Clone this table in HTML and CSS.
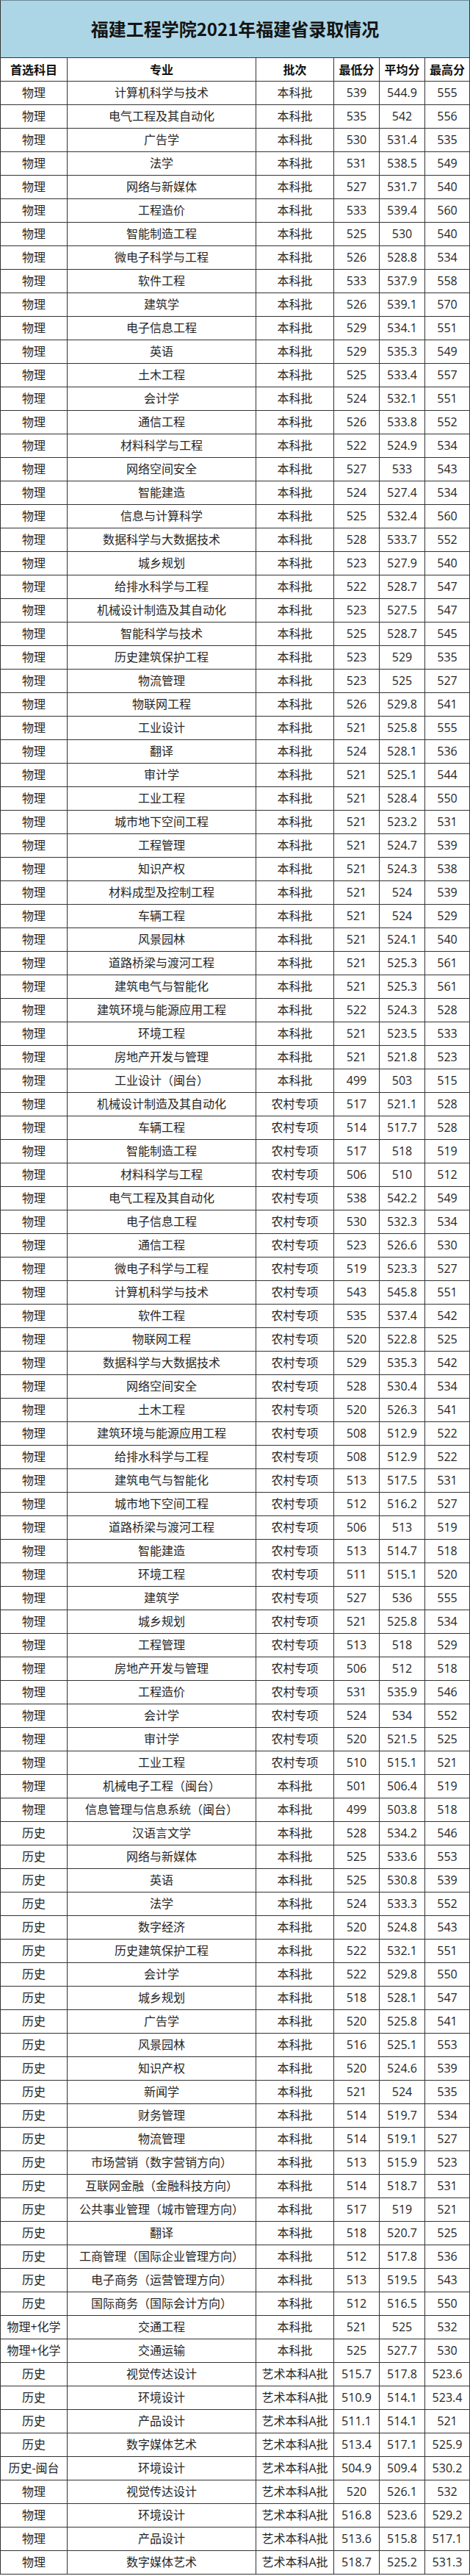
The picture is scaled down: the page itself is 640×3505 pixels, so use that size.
FILE: index.html
```html
<!DOCTYPE html>
<html lang="zh-CN">
<head>
<meta charset="utf-8">
<title>福建工程学院2021年福建省录取情况</title>
<link rel="stylesheet" href="styles.css">
</head>
<body>
<div class="sheet">
<div class="title">福建工程学院2021年福建省录取情况</div>
<div class="row head"><span>首选科目</span><span>专业</span><span>批次</span><span>最低分</span><span>平均分</span><span>最高分</span></div>
<div class="row"><span>物理</span><span>计算机科学与技术</span><span>本科批</span><span>539</span><span>544.9</span><span>555</span></div>
<div class="row"><span>物理</span><span>电气工程及其自动化</span><span>本科批</span><span>535</span><span>542</span><span>556</span></div>
<div class="row"><span>物理</span><span>广告学</span><span>本科批</span><span>530</span><span>531.4</span><span>535</span></div>
<div class="row"><span>物理</span><span>法学</span><span>本科批</span><span>531</span><span>538.5</span><span>549</span></div>
<div class="row"><span>物理</span><span>网络与新媒体</span><span>本科批</span><span>527</span><span>531.7</span><span>540</span></div>
<div class="row"><span>物理</span><span>工程造价</span><span>本科批</span><span>533</span><span>539.4</span><span>560</span></div>
<div class="row"><span>物理</span><span>智能制造工程</span><span>本科批</span><span>525</span><span>530</span><span>540</span></div>
<div class="row"><span>物理</span><span>微电子科学与工程</span><span>本科批</span><span>526</span><span>528.8</span><span>534</span></div>
<div class="row"><span>物理</span><span>软件工程</span><span>本科批</span><span>533</span><span>537.9</span><span>558</span></div>
<div class="row"><span>物理</span><span>建筑学</span><span>本科批</span><span>526</span><span>539.1</span><span>570</span></div>
<div class="row"><span>物理</span><span>电子信息工程</span><span>本科批</span><span>529</span><span>534.1</span><span>551</span></div>
<div class="row"><span>物理</span><span>英语</span><span>本科批</span><span>529</span><span>535.3</span><span>549</span></div>
<div class="row"><span>物理</span><span>土木工程</span><span>本科批</span><span>525</span><span>533.4</span><span>557</span></div>
<div class="row"><span>物理</span><span>会计学</span><span>本科批</span><span>524</span><span>532.1</span><span>551</span></div>
<div class="row"><span>物理</span><span>通信工程</span><span>本科批</span><span>526</span><span>533.8</span><span>552</span></div>
<div class="row"><span>物理</span><span>材料科学与工程</span><span>本科批</span><span>522</span><span>524.9</span><span>534</span></div>
<div class="row"><span>物理</span><span>网络空间安全</span><span>本科批</span><span>527</span><span>533</span><span>543</span></div>
<div class="row"><span>物理</span><span>智能建造</span><span>本科批</span><span>524</span><span>527.4</span><span>534</span></div>
<div class="row"><span>物理</span><span>信息与计算科学</span><span>本科批</span><span>525</span><span>532.4</span><span>560</span></div>
<div class="row"><span>物理</span><span>数据科学与大数据技术</span><span>本科批</span><span>528</span><span>533.7</span><span>552</span></div>
<div class="row"><span>物理</span><span>城乡规划</span><span>本科批</span><span>523</span><span>527.9</span><span>540</span></div>
<div class="row"><span>物理</span><span>给排水科学与工程</span><span>本科批</span><span>522</span><span>528.7</span><span>547</span></div>
<div class="row"><span>物理</span><span>机械设计制造及其自动化</span><span>本科批</span><span>523</span><span>527.5</span><span>547</span></div>
<div class="row"><span>物理</span><span>智能科学与技术</span><span>本科批</span><span>525</span><span>528.7</span><span>545</span></div>
<div class="row"><span>物理</span><span>历史建筑保护工程</span><span>本科批</span><span>523</span><span>529</span><span>535</span></div>
<div class="row"><span>物理</span><span>物流管理</span><span>本科批</span><span>523</span><span>525</span><span>527</span></div>
<div class="row"><span>物理</span><span>物联网工程</span><span>本科批</span><span>526</span><span>529.8</span><span>541</span></div>
<div class="row"><span>物理</span><span>工业设计</span><span>本科批</span><span>521</span><span>525.8</span><span>555</span></div>
<div class="row"><span>物理</span><span>翻译</span><span>本科批</span><span>524</span><span>528.1</span><span>536</span></div>
<div class="row"><span>物理</span><span>审计学</span><span>本科批</span><span>521</span><span>525.1</span><span>544</span></div>
<div class="row"><span>物理</span><span>工业工程</span><span>本科批</span><span>521</span><span>528.4</span><span>550</span></div>
<div class="row"><span>物理</span><span>城市地下空间工程</span><span>本科批</span><span>521</span><span>523.2</span><span>531</span></div>
<div class="row"><span>物理</span><span>工程管理</span><span>本科批</span><span>521</span><span>524.7</span><span>539</span></div>
<div class="row"><span>物理</span><span>知识产权</span><span>本科批</span><span>521</span><span>524.3</span><span>538</span></div>
<div class="row"><span>物理</span><span>材料成型及控制工程</span><span>本科批</span><span>521</span><span>524</span><span>539</span></div>
<div class="row"><span>物理</span><span>车辆工程</span><span>本科批</span><span>521</span><span>524</span><span>529</span></div>
<div class="row"><span>物理</span><span>风景园林</span><span>本科批</span><span>521</span><span>524.1</span><span>540</span></div>
<div class="row"><span>物理</span><span>道路桥梁与渡河工程</span><span>本科批</span><span>521</span><span>525.3</span><span>561</span></div>
<div class="row"><span>物理</span><span>建筑电气与智能化</span><span>本科批</span><span>521</span><span>525.3</span><span>561</span></div>
<div class="row"><span>物理</span><span>建筑环境与能源应用工程</span><span>本科批</span><span>522</span><span>524.3</span><span>528</span></div>
<div class="row"><span>物理</span><span>环境工程</span><span>本科批</span><span>521</span><span>523.5</span><span>533</span></div>
<div class="row"><span>物理</span><span>房地产开发与管理</span><span>本科批</span><span>521</span><span>521.8</span><span>523</span></div>
<div class="row"><span>物理</span><span>工业设计（闽台）</span><span>本科批</span><span>499</span><span>503</span><span>515</span></div>
<div class="row"><span>物理</span><span>机械设计制造及其自动化</span><span>农村专项</span><span>517</span><span>521.1</span><span>528</span></div>
<div class="row"><span>物理</span><span>车辆工程</span><span>农村专项</span><span>514</span><span>517.7</span><span>528</span></div>
<div class="row"><span>物理</span><span>智能制造工程</span><span>农村专项</span><span>517</span><span>518</span><span>519</span></div>
<div class="row"><span>物理</span><span>材料科学与工程</span><span>农村专项</span><span>506</span><span>510</span><span>512</span></div>
<div class="row"><span>物理</span><span>电气工程及其自动化</span><span>农村专项</span><span>538</span><span>542.2</span><span>549</span></div>
<div class="row"><span>物理</span><span>电子信息工程</span><span>农村专项</span><span>530</span><span>532.3</span><span>534</span></div>
<div class="row"><span>物理</span><span>通信工程</span><span>农村专项</span><span>523</span><span>526.6</span><span>530</span></div>
<div class="row"><span>物理</span><span>微电子科学与工程</span><span>农村专项</span><span>519</span><span>523.3</span><span>527</span></div>
<div class="row"><span>物理</span><span>计算机科学与技术</span><span>农村专项</span><span>543</span><span>545.8</span><span>551</span></div>
<div class="row"><span>物理</span><span>软件工程</span><span>农村专项</span><span>535</span><span>537.4</span><span>542</span></div>
<div class="row"><span>物理</span><span>物联网工程</span><span>农村专项</span><span>520</span><span>522.8</span><span>525</span></div>
<div class="row"><span>物理</span><span>数据科学与大数据技术</span><span>农村专项</span><span>529</span><span>535.3</span><span>542</span></div>
<div class="row"><span>物理</span><span>网络空间安全</span><span>农村专项</span><span>528</span><span>530.4</span><span>534</span></div>
<div class="row"><span>物理</span><span>土木工程</span><span>农村专项</span><span>520</span><span>526.3</span><span>541</span></div>
<div class="row"><span>物理</span><span>建筑环境与能源应用工程</span><span>农村专项</span><span>508</span><span>512.9</span><span>522</span></div>
<div class="row"><span>物理</span><span>给排水科学与工程</span><span>农村专项</span><span>508</span><span>512.9</span><span>522</span></div>
<div class="row"><span>物理</span><span>建筑电气与智能化</span><span>农村专项</span><span>513</span><span>517.5</span><span>531</span></div>
<div class="row"><span>物理</span><span>城市地下空间工程</span><span>农村专项</span><span>512</span><span>516.2</span><span>527</span></div>
<div class="row"><span>物理</span><span>道路桥梁与渡河工程</span><span>农村专项</span><span>506</span><span>513</span><span>519</span></div>
<div class="row"><span>物理</span><span>智能建造</span><span>农村专项</span><span>513</span><span>514.7</span><span>518</span></div>
<div class="row"><span>物理</span><span>环境工程</span><span>农村专项</span><span>511</span><span>515.1</span><span>520</span></div>
<div class="row"><span>物理</span><span>建筑学</span><span>农村专项</span><span>527</span><span>536</span><span>555</span></div>
<div class="row"><span>物理</span><span>城乡规划</span><span>农村专项</span><span>521</span><span>525.8</span><span>534</span></div>
<div class="row"><span>物理</span><span>工程管理</span><span>农村专项</span><span>513</span><span>518</span><span>529</span></div>
<div class="row"><span>物理</span><span>房地产开发与管理</span><span>农村专项</span><span>506</span><span>512</span><span>518</span></div>
<div class="row"><span>物理</span><span>工程造价</span><span>农村专项</span><span>531</span><span>535.9</span><span>546</span></div>
<div class="row"><span>物理</span><span>会计学</span><span>农村专项</span><span>524</span><span>534</span><span>552</span></div>
<div class="row"><span>物理</span><span>审计学</span><span>农村专项</span><span>520</span><span>521.5</span><span>525</span></div>
<div class="row"><span>物理</span><span>工业工程</span><span>农村专项</span><span>510</span><span>515.1</span><span>521</span></div>
<div class="row"><span>物理</span><span>机械电子工程（闽台）</span><span>本科批</span><span>501</span><span>506.4</span><span>519</span></div>
<div class="row"><span>物理</span><span>信息管理与信息系统（闽台）</span><span>本科批</span><span>499</span><span>503.8</span><span>518</span></div>
<div class="row"><span>历史</span><span>汉语言文学</span><span>本科批</span><span>528</span><span>534.2</span><span>546</span></div>
<div class="row"><span>历史</span><span>网络与新媒体</span><span>本科批</span><span>525</span><span>533.6</span><span>553</span></div>
<div class="row"><span>历史</span><span>英语</span><span>本科批</span><span>525</span><span>530.8</span><span>539</span></div>
<div class="row"><span>历史</span><span>法学</span><span>本科批</span><span>524</span><span>533.3</span><span>552</span></div>
<div class="row"><span>历史</span><span>数字经济</span><span>本科批</span><span>520</span><span>524.8</span><span>543</span></div>
<div class="row"><span>历史</span><span>历史建筑保护工程</span><span>本科批</span><span>522</span><span>532.1</span><span>551</span></div>
<div class="row"><span>历史</span><span>会计学</span><span>本科批</span><span>522</span><span>529.8</span><span>550</span></div>
<div class="row"><span>历史</span><span>城乡规划</span><span>本科批</span><span>518</span><span>528.1</span><span>547</span></div>
<div class="row"><span>历史</span><span>广告学</span><span>本科批</span><span>520</span><span>525.8</span><span>541</span></div>
<div class="row"><span>历史</span><span>风景园林</span><span>本科批</span><span>516</span><span>525.1</span><span>553</span></div>
<div class="row"><span>历史</span><span>知识产权</span><span>本科批</span><span>520</span><span>524.6</span><span>539</span></div>
<div class="row"><span>历史</span><span>新闻学</span><span>本科批</span><span>521</span><span>524</span><span>535</span></div>
<div class="row"><span>历史</span><span>财务管理</span><span>本科批</span><span>514</span><span>519.7</span><span>534</span></div>
<div class="row"><span>历史</span><span>物流管理</span><span>本科批</span><span>514</span><span>519.1</span><span>527</span></div>
<div class="row"><span>历史</span><span>市场营销（数字营销方向）</span><span>本科批</span><span>513</span><span>515.9</span><span>523</span></div>
<div class="row"><span>历史</span><span>互联网金融（金融科技方向）</span><span>本科批</span><span>514</span><span>518.7</span><span>531</span></div>
<div class="row"><span>历史</span><span>公共事业管理（城市管理方向）</span><span>本科批</span><span>517</span><span>519</span><span>521</span></div>
<div class="row"><span>历史</span><span>翻译</span><span>本科批</span><span>518</span><span>520.7</span><span>525</span></div>
<div class="row"><span>历史</span><span>工商管理（国际企业管理方向）</span><span>本科批</span><span>512</span><span>517.8</span><span>536</span></div>
<div class="row"><span>历史</span><span>电子商务（运营管理方向）</span><span>本科批</span><span>513</span><span>519.5</span><span>543</span></div>
<div class="row"><span>历史</span><span>国际商务（国际会计方向）</span><span>本科批</span><span>512</span><span>516.5</span><span>550</span></div>
<div class="row"><span>物理+化学</span><span>交通工程</span><span>本科批</span><span>521</span><span>525</span><span>532</span></div>
<div class="row"><span>物理+化学</span><span>交通运输</span><span>本科批</span><span>525</span><span>527.7</span><span>530</span></div>
<div class="row"><span>历史</span><span>视觉传达设计</span><span>艺术本科A批</span><span>515.7</span><span>517.8</span><span>523.6</span></div>
<div class="row"><span>历史</span><span>环境设计</span><span>艺术本科A批</span><span>510.9</span><span>514.1</span><span>523.4</span></div>
<div class="row"><span>历史</span><span>产品设计</span><span>艺术本科A批</span><span>511.1</span><span>514.1</span><span>521</span></div>
<div class="row"><span>历史</span><span>数字媒体艺术</span><span>艺术本科A批</span><span>513.4</span><span>517.1</span><span>525.9</span></div>
<div class="row"><span>历史-闽台</span><span>环境设计</span><span>艺术本科A批</span><span>504.9</span><span>509.4</span><span>530.2</span></div>
<div class="row"><span>物理</span><span>视觉传达设计</span><span>艺术本科A批</span><span>520</span><span>526.1</span><span>532</span></div>
<div class="row"><span>物理</span><span>环境设计</span><span>艺术本科A批</span><span>516.8</span><span>523.6</span><span>529.2</span></div>
<div class="row"><span>物理</span><span>产品设计</span><span>艺术本科A批</span><span>513.6</span><span>515.8</span><span>517.1</span></div>
<div class="row last"><span>物理</span><span>数字媒体艺术</span><span>艺术本科A批</span><span>518.7</span><span>525.2</span><span>531.3</span></div>
</div>
</body>
</html>
```

FILE: styles.css
```css
html, body {
  margin: 0;
  padding: 0;
  background: #ffffff;
}

body {
  font-family: "Open Sans", "Noto Sans CJK SC", sans-serif;
  color: #262626;
}

.sheet {
  width: 640px;
}

.title {
  box-sizing: border-box;
  height: 78px;
  background: #acd5e5;
  border-top: 1px solid #6a8a96;
  border-left: 1px solid #333333;
  border-right: 1px solid #333333;
  display: flex;
  align-items: center;
  justify-content: center;
  padding-bottom: 2px;
  font-family: "Noto Sans CJK SC", sans-serif;
  font-weight: 700;
  font-size: 24px;
  color: #141414;
  letter-spacing: 0;
}

.row {
  box-sizing: border-box;
  display: grid;
  grid-template-columns: 91px 257px 106px 62px 62px 62px;
  height: 32px;
  border-top: 1px solid #333333;
}

.row.last {
  height: 33px;
  border-bottom: 1px solid #333333;
}

.row span {
  box-sizing: border-box;
  display: flex;
  align-items: center;
  justify-content: center;
  border-left: 1px solid #333333;
  font-size: 16px;
  line-height: 20px;
  white-space: nowrap;
  padding-bottom: 2px;
}

.row span:last-child {
  border-right: 1px solid #333333;
}

.row.head span {
  font-family: "Noto Sans CJK SC", sans-serif;
  font-weight: 700;
  color: #111111;
}
```
